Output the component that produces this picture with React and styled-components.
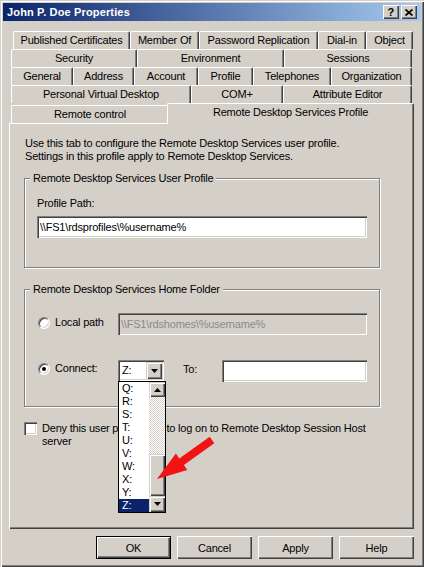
import React from 'react';
import styled, { createGlobalStyle } from 'styled-components';

const FACE = '#d4d0c8';
const LIGHT = '#ffffff';
const SHADOW = '#808080';
const DARK = '#404040';

const GlobalStyle = createGlobalStyle`
  html, body { margin: 0; padding: 0; background: ${FACE}; }
  body { font-family: "Liberation Sans", Arial, sans-serif; font-size: 11px; color: #000; }
  * { box-sizing: border-box; }
`;

const Window = styled.div`
  position: relative;
  width: 424px;
  height: 567px;
  padding: 3px;
  background: ${FACE};
  box-shadow: inset 1px 1px 0 ${FACE}, inset 2px 2px 0 ${LIGHT}, inset -1px -1px 0 ${DARK}, inset -2px -2px 0 ${SHADOW};
  display: flex;
  flex-direction: column;
  letter-spacing: -0.2px;
  overflow: hidden;
`;

const TitleBar = styled.div`
  flex: none;
  height: 18px;
  display: flex;
  align-items: center;
  padding: 0 4px;
  background: linear-gradient(90deg, #0a246a, #a6caf0);
  color: #fff;
  font-weight: bold;
  letter-spacing: 0.15px;
`;

const TitleText = styled.div`
  flex: 1;
  white-space: nowrap;
`;

const CaptionButtons = styled.div`
  display: flex;
  gap: 2px;
`;

const CaptionButton = styled.div`
  width: 16px;
  height: 14px;
  background: ${FACE};
  color: #000;
  box-shadow: inset 1px 1px 0 ${LIGHT}, inset -1px -1px 0 ${DARK}, inset -2px -2px 0 ${SHADOW};
  display: flex;
  align-items: center;
  justify-content: center;
  font-weight: bold;
  font-size: 11px;
  line-height: 14px;
`;

const Body = styled.div`
  flex: 1;
  display: flex;
  flex-direction: column;
  padding: 10px 7px 0 6px;
`;

const TabRow = styled.div`
  display: flex;
  height: ${p => p.$h || 18}px;
  align-items: flex-end;
  margin-left: ${p => p.$offset}px;
`;

const Tab = styled.div`
  flex: none;
  width: ${p => p.$w}px;
  height: 18px;
  border-top: 1px solid ${LIGHT};
  border-left: 1px solid ${LIGHT};
  border-right: 1px solid ${DARK};
  border-radius: 2px 2px 0 0;
  box-shadow: inset -1px 0 0 ${SHADOW};
  display: flex;
  justify-content: center;
  line-height: 17px;
  white-space: nowrap;
  background: ${FACE};
`;

const SelectedTab = styled(Tab)`
  height: 21px;
  margin-left: -2px;
  margin-bottom: -1px;
  position: relative;
  z-index: 1;
`;

const Panel = styled.div`
  position: relative;
  height: 406px;
  background: ${FACE};
  box-shadow: inset 1px 1px 0 ${LIGHT}, inset -1px -1px 0 ${DARK}, inset -2px -2px 0 ${SHADOW};
  padding: 14px 0 0 15px;
`;

const Description = styled.div`
  margin-left: 1px;
  line-height: 13px;
`;

const GroupBox = styled.div`
  position: relative;
  width: 356px;
  height: ${p => p.$h}px;
  margin-top: ${p => p.$mt}px;
  border: 1px solid ${SHADOW};
  box-shadow: inset 1px 1px 0 ${LIGHT}, 1px 1px 0 ${LIGHT};
  padding: ${p => p.$pad};
`;

const GroupLabel = styled.div`
  position: absolute;
  left: 5px;
  top: -7px;
  padding: 0 3px;
  background: ${FACE};
  line-height: 13px;
  white-space: nowrap;
`;

const FieldLabel = styled.div`
  line-height: 13px;
`;

const Field = styled.div`
  width: ${p => p.$w}px;
  height: 22px;
  margin-top: ${p => p.$mt || 0}px;
  background: ${p => (p.$disabled ? FACE : '#fff')};
  color: ${p => (p.$disabled ? '#8a8a8a' : '#000')};
  box-shadow: inset 1px 1px 0 ${SHADOW}, inset 2px 2px 0 ${DARK}, inset -1px -1px 0 ${LIGHT}, inset -2px -2px 0 ${FACE};
  padding: 0 3px;
  line-height: 22px;
  white-space: nowrap;
  overflow: hidden;
`;

const OptionRow = styled.div`
  display: flex;
  align-items: flex-start;
  height: 22px;
  margin-top: ${p => p.$mt || 0}px;
`;

const RadioOption = styled.div`
  width: 80px;
  display: flex;
  align-items: center;
  gap: 5px;
  margin-top: ${p => p.$mt}px;
  line-height: 13px;
`;

const Radio = styled.div`
  position: relative;
  width: 12px;
  height: 12px;
  border-radius: 50%;
  background: #fff;
  border: 1px solid;
  border-color: ${SHADOW} ${LIGHT} ${LIGHT} ${SHADOW};
  box-shadow: inset 1px 1px 0 ${DARK}, inset -1px -1px 0 ${FACE};
  &::after {
    content: '';
    display: ${p => (p.$checked ? 'block' : 'none')};
    position: absolute;
    left: 3px;
    top: 3px;
    width: 4px;
    height: 4px;
    border-radius: 50%;
    background: #000;
  }
`;

const ComboWrap = styled.div`
  position: relative;
  width: 46px;
  height: 21px;
  background: #fff;
  box-shadow: inset 1px 1px 0 ${SHADOW}, inset 2px 2px 0 ${DARK}, inset -1px -1px 0 ${LIGHT}, inset -2px -2px 0 ${FACE};
  padding: 2px;
  display: flex;
`;

const ComboText = styled.div`
  flex: 1;
  padding-left: 2px;
  line-height: 17px;
`;

const ArrowButton = styled.div`
  flex: none;
  width: ${p => p.$w || 16}px;
  height: ${p => p.$h}px;
  background: ${FACE};
  box-shadow: inset 1px 1px 0 ${FACE}, inset 2px 2px 0 ${LIGHT}, inset -1px -1px 0 ${DARK}, inset -2px -2px 0 ${SHADOW};
  display: flex;
  align-items: center;
  justify-content: center;
`;

const ToLabel = styled.div`
  width: 39px;
  margin-left: 19px;
  margin-top: 3px;
  line-height: 13px;
`;

const DropList = styled.div`
  position: absolute;
  left: 0;
  top: 21px;
  width: 48px;
  height: 132px;
  border: 1px solid #000;
  background: #fff;
  display: flex;
  z-index: 5;
`;

const ListItems = styled.div`
  flex: 1;
  display: flex;
  flex-direction: column;
`;

const ListItem = styled.div`
  height: 13px;
  line-height: 13px;
  padding-left: 3px;
  background: ${p => (p.$selected ? '#0a246a' : 'transparent')};
  color: ${p => (p.$selected ? '#fff' : '#000')};
`;

const ScrollBar = styled.div`
  width: 16px;
  display: flex;
  flex-direction: column;
`;

const ScrollTrack = styled.div`
  flex: 1;
  background-color: ${FACE};
  background-image: repeating-conic-gradient(#fff 0 25%, ${FACE} 0 50%);
  background-size: 2px 2px;
`;

const ScrollThumb = styled(ArrowButton)``;

const CheckRow = styled.div`
  display: flex;
  gap: 5px;
  margin-top: 15px;
`;

const CheckBox = styled.div`
  flex: none;
  width: 13px;
  height: 13px;
  background: #fff;
  box-shadow: inset 1px 1px 0 ${SHADOW}, inset 2px 2px 0 ${DARK}, inset -1px -1px 0 ${LIGHT}, inset -2px -2px 0 ${FACE};
`;

const CheckText = styled.div`
  width: 338px;
  line-height: 13px;
`;

const ButtonRow = styled.div`
  display: flex;
  justify-content: flex-end;
  gap: 6px;
  margin-top: 7px;
`;

const Button = styled.div`
  width: 75px;
  height: 23px;
  display: flex;
  align-items: center;
  justify-content: center;
  background: ${FACE};
  border: ${p => (p.$default ? '1px solid #000' : 'none')};
  box-shadow: inset 1px 1px 0 ${LIGHT}, inset -1px -1px 0 ${DARK}, inset -2px -2px 0 ${SHADOW};
`;

const ArrowOverlay = styled.svg`
  position: absolute;
  left: 150px;
  top: 430px;
  z-index: 10;
`;

const Tri = ({ up }) => (
  <svg width="7" height="4" viewBox="0 0 7 4">
    <polygon points={up ? '3.5,0 7,4 0,4' : '0,0 7,0 3.5,4'} fill="#000" />
  </svg>
);

const rows = [
  { offset: 4, tabs: [['Published Certificates', 117], ['Member Of', 69], ['Password Replication', 119], ['Dial-in', 48], ['Object', 47]] },
  { offset: 2, tabs: [['Security', 126], ['Environment', 147], ['Sessions', 128]] },
  { offset: 2, tabs: [['General', 62], ['Address', 61], ['Account', 64], ['Profile', 55], ['Telephones', 78], ['Organization', 81]] },
  { offset: 2, tabs: [['Personal Virtual Desktop', 180], ['COM+', 92], ['Attribute Editor', 129]] },
];

const drives = ['Q:', 'R:', 'S:', 'T:', 'U:', 'V:', 'W:', 'X:', 'Y:', 'Z:'];

export default function App() {
  return (
    <>
      <GlobalStyle />
      <Window>
        <TitleBar>
          <TitleText>John P. Doe Properties</TitleText>
          <CaptionButtons>
            <CaptionButton>?</CaptionButton>
            <CaptionButton>
              <svg width="8" height="7" viewBox="0 0 8 7">
                <path d="M0.5 0.5 L7.5 6.5 M7.5 0.5 L0.5 6.5" stroke="#000" strokeWidth="1.7" />
              </svg>
            </CaptionButton>
          </CaptionButtons>
        </TitleBar>
        <Body>
          {rows.map((row, i) => (
            <TabRow key={i} $offset={row.offset}>
              {row.tabs.map(([label, w]) => (
                <Tab key={label} $w={w}>{label}</Tab>
              ))}
            </TabRow>
          ))}
          <TabRow $offset={2} $h={20}>
            <Tab $w={158}>Remote control</Tab>
            <SelectedTab $w={247}>Remote Desktop Services Profile</SelectedTab>
          </TabRow>
          <Panel>
            <Description>
              Use this tab to configure the Remote Desktop Services user profile.
              <br />
              Settings in this profile apply to Remote Desktop Services.
            </Description>
            <GroupBox $h={90} $mt={15} $pad="18px 0 0 12px">
              <GroupLabel>Remote Desktop Services User Profile</GroupLabel>
              <FieldLabel>Profile Path:</FieldLabel>
              <Field $w={330} $mt={6}>{'\\\\FS1\\rdsprofiles\\%username%'}</Field>
            </GroupBox>
            <GroupBox $h={118} $mt={21} $pad="23px 0 0 13px">
              <GroupLabel>Remote Desktop Services Home Folder</GroupLabel>
              <OptionRow>
                <RadioOption $mt={3}>
                  <Radio />
                  <span>Local path</span>
                </RadioOption>
                <Field $w={249} $disabled>{'\\\\FS1\\rdshomes\\%username%'}</Field>
              </OptionRow>
              <OptionRow $mt={25}>
                <RadioOption $mt={2}>
                  <Radio $checked />
                  <span>Connect:</span>
                </RadioOption>
                <ComboWrap>
                  <ComboText>Z:</ComboText>
                  <ArrowButton $h={17}>
                    <Tri />
                  </ArrowButton>
                  <DropList>
                    <ListItems>
                      {drives.map(d => (
                        <ListItem key={d} $selected={d === 'Z:'}>{d}</ListItem>
                      ))}
                    </ListItems>
                    <ScrollBar>
                      <ArrowButton $h={15}>
                        <Tri up />
                      </ArrowButton>
                      <ScrollTrack />
                      <ScrollThumb $h={42} />
                      <ArrowButton $h={16}>
                        <Tri />
                      </ArrowButton>
                    </ScrollBar>
                  </DropList>
                </ComboWrap>
                <ToLabel>To:</ToLabel>
                <Field $w={145} />
              </OptionRow>
            </GroupBox>
            <CheckRow>
              <CheckBox />
              <CheckText>
                Deny this user permission to log on to Remote Desktop Session Host server
              </CheckText>
            </CheckRow>
          </Panel>
          <ButtonRow>
            <Button $default>OK</Button>
            <Button>Cancel</Button>
            <Button>Apply</Button>
            <Button>Help</Button>
          </ButtonRow>
        </Body>
        <ArrowOverlay width="70" height="55" viewBox="0 0 70 55">
          <polygon
            points="59.7,6.7 29.3,28.5 25.9,23.6 7,49 37.3,40 33.9,35.1 64.3,13.3"
            fill="#f01414"
          />
        </ArrowOverlay>
      </Window>
    </>
  );
}
